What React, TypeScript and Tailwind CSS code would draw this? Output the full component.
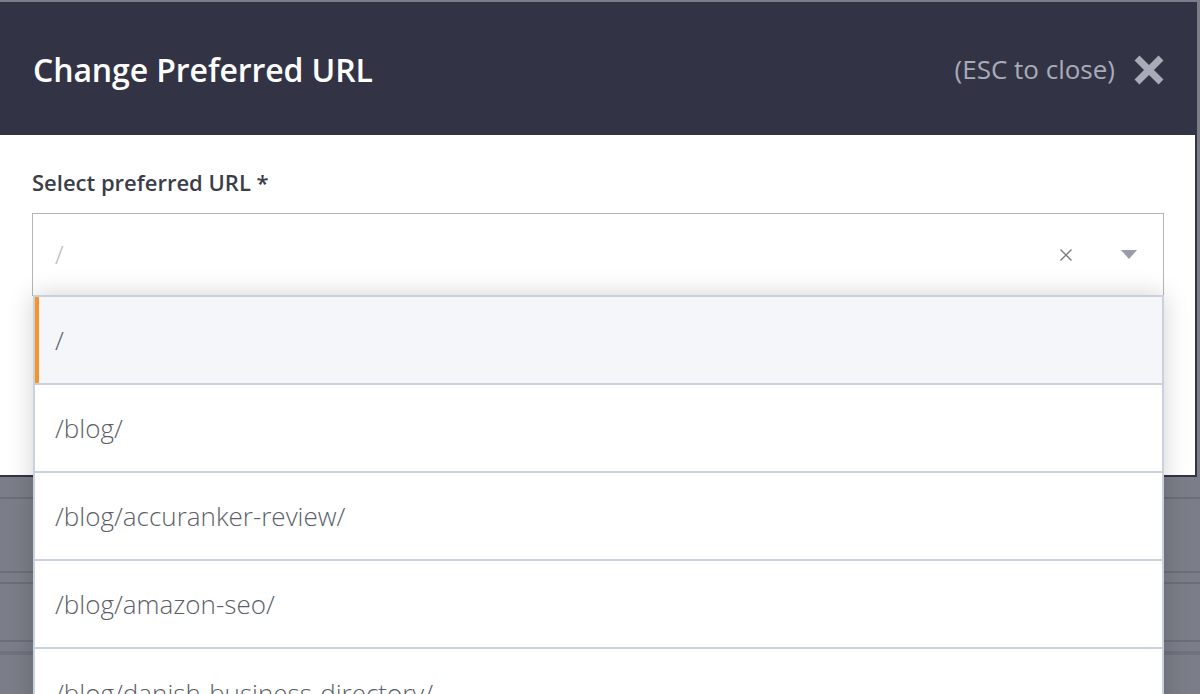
import React from "react";

const options = [
  "/",
  "/blog/",
  "/blog/accuranker-review/",
  "/blog/amazon-seo/",
  "/blog/danish-business-directory/",
];

export default function App() {
  return (
    <div
      className="w-[1200px] h-[694px] overflow-hidden bg-[#7b7d88] flex flex-col"
      style={{ fontFamily: '"Open Sans", "Noto Sans", sans-serif' }}
    >
      <div className="h-[2px] shrink-0" />

      {/* modal */}
      <div className="w-[1197px] shrink-0 flex flex-col">
        <div className="h-[133px] bg-[#323446] flex items-center justify-between pl-[33px] pr-[32px]">
          <h1 className="text-white text-[32px] font-semibold tracking-[-0.1px] mt-[2px]">
            Change Preferred URL
          </h1>
          <div className="flex items-center gap-[18px] mt-[2px]">
            <span className="text-[#a9abb8] text-[26px]">(ESC to close)</span>
            <svg width="32" height="32" viewBox="0 0 32 32">
              <path
                d="M4 4 L28 28 M28 4 L4 28"
                stroke="#a9abb8"
                strokeWidth="7"
                strokeLinecap="butt"
              />
            </svg>
          </div>
        </div>
        <div className="h-[342px] bg-white border-r-2 border-b-2 border-[#323446] pt-[32px] pl-[32px] pr-[31px]">
          <label className="block text-[#3b3e4a] text-[22px] font-semibold leading-[30px]">
            Select preferred URL *
          </label>
          <div className="relative mt-[16px] w-[1132px]">
            <div className="h-[83px] border border-[#b5b5b5] flex items-center pl-[22px] pr-[26px]">
              <span className="text-[#b8b8b8] text-[25px] font-light flex-1">/</span>
              <svg width="14" height="14" viewBox="0 0 14 14" className="mr-[48px]">
                <path d="M1.5 1.5 L12.5 12.5 M12.5 1.5 L1.5 12.5" stroke="#7a7a7a" strokeWidth="1.4" />
              </svg>
              <svg width="16" height="9" viewBox="0 0 16 9">
                <path d="M0 0 L16 0 L8 9 Z" fill="#9a9ca8" />
              </svg>
            </div>

            {/* dropdown menu */}
            <div className="absolute left-[1px] top-full mt-[-1px] w-[1131px] bg-white border-2 border-[#c9d1dd] shadow-[0_0_24px_rgba(0,0,0,0.18)] z-10">
              {options.map((o, i) => (
                <div
                  key={o}
                  className={
                    "relative h-[88px] flex items-center pl-[20px] text-[26px] font-light text-[#5c5f69] whitespace-nowrap " +
                    (i < options.length - 1 ? "border-b-2 border-[#c9d1dd] " : "") +
                    (i === 0 ? "bg-[#f4f6fa]" : "bg-white")
                  }
                >
                  {i === 0 && (
                    <div className="absolute left-0 top-0 bottom-0 w-[4px] bg-[#f7932a]" />
                  )}
                  {o}
                </div>
              ))}
            </div>
          </div>
        </div>
      </div>

      {/* background page under overlay */}
      <div className="flex flex-col">
        <div className="h-[20px]" />
        <div className="h-[2px] bg-[#6c6e7a]" />
        <div className="h-[72px]" />
        <div className="h-[2px] bg-[#6c6e7a]" />
        <div className="h-[9px]" />
        <div className="h-[2px] bg-[#6c6e7a]" />
        <div className="h-[56px]" />
        <div className="h-[2px] bg-[#6c6e7a]" />
        <div className="h-[9px]" />
        <div className="h-[4px] bg-[#70727e]" />
      </div>
    </div>
  );
}
